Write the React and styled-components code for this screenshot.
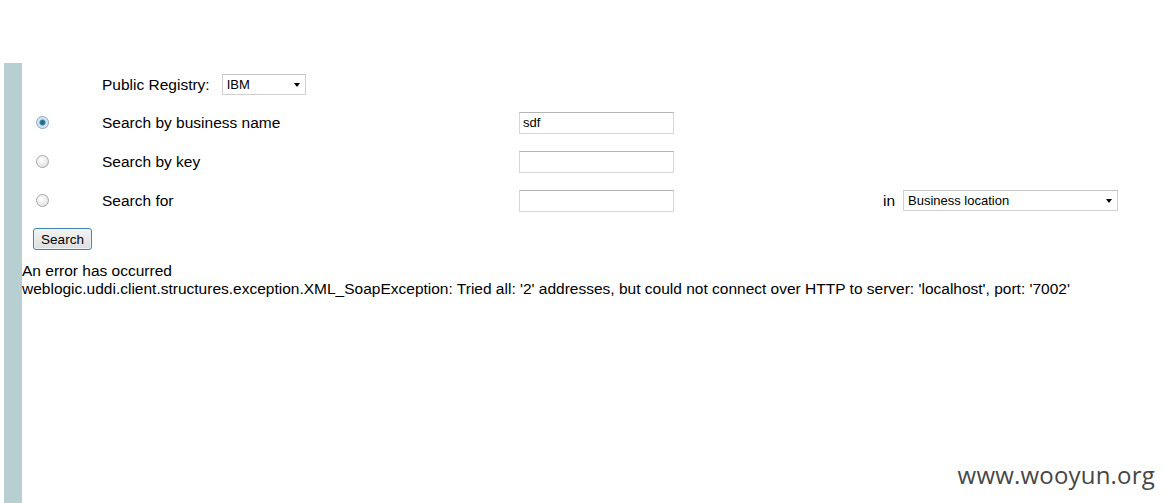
import React from "react";
import styled, { createGlobalStyle } from "styled-components";

const GlobalStyle = createGlobalStyle`
  html, body {
    margin: 0;
    padding: 0;
    background: #ffffff;
  }
  #root {
    height: 503px;
  }
`;

const Page = styled.div`
  position: relative;
  display: flex;
  height: 503px;
  font-family: "Liberation Sans", Arial, sans-serif;
  color: #000;
  overflow: hidden;
`;

const SideBar = styled.div`
  width: 18px;
  margin-left: 4px;
  margin-top: 63px;
  background: #b7cfd0;
  flex-shrink: 0;
`;

const Content = styled.div`
  flex: 1;
  padding-top: 66px;
`;

const FormGrid = styled.div`
  display: grid;
  grid-template-columns: 80px 417px 364px 20px 215px;
  grid-template-rows: 37px 39px 39px 39px;
  align-items: center;
  font-size: 15.5px;
`;

const Cell = styled.div`
  grid-column: ${(p) => p.$col || "auto"};
  display: flex;
  align-items: center;
`;

const RadioCell = styled(Cell)`
  padding-left: 14px;
`;

const Label = styled.span`
  font-size: 15.5px;
  white-space: nowrap;
`;

const Radio = styled.input.attrs({ type: "radio" })`
  appearance: none;
  margin: 0;
  width: 13px;
  height: 13px;
  border-radius: 50%;
  border: 1px solid #a7a7a7;
  background: radial-gradient(circle at 40% 35%, #ffffff 0%, #e6e6e6 70%, #d3d3d3 100%);
  box-sizing: border-box;
  &:checked {
    border-color: #8ca3b8;
    background: radial-gradient(circle, #1d5f86 0%, #2a7aa6 30%, #cfe0ec 45%, #eef3f7 100%);
  }
`;

const SelectWrap = styled.div`
  position: relative;
  display: inline-block;
  width: ${(p) => p.$w}px;
  height: 21px;
  margin-left: ${(p) => p.$ml || 0}px;
`;

const Select = styled.select`
  appearance: none;
  width: 100%;
  height: 100%;
  box-sizing: border-box;
  border: 1px solid #d0d0d0;
  border-top-color: #c4c4c4;
  background: #fff;
  font-family: "Liberation Sans", Arial, sans-serif;
  font-size: 13px;
  padding: 0 0 0 4px;
  color: #000;
  outline: none;
`;

const Arrow = styled.span`
  position: absolute;
  right: 6px;
  top: 9px;
  width: 0;
  height: 0;
  border-left: 3.5px solid transparent;
  border-right: 3.5px solid transparent;
  border-top: 4px solid #000;
  pointer-events: none;
`;

const TextInput = styled.input.attrs({ type: "text" })`
  width: 155px;
  height: 22px;
  box-sizing: border-box;
  border: 1px solid #d6d6d6;
  border-top-color: #b3b3b3;
  font-family: "Liberation Sans", Arial, sans-serif;
  font-size: 13px;
  padding: 0 3px;
  margin: 0;
  outline: none;
`;

const InLabel = styled.span`
  font-size: 15.5px;
`;

const SearchButton = styled.button`
  margin: 8px 0 0 11px;
  width: 59px;
  height: 22px;
  box-sizing: border-box;
  border: 1px solid #3f86b6;
  border-radius: 3px;
  background: linear-gradient(#f3f3f3, #dedede);
  box-shadow: inset 0 0 0 1px #e9f3fa;
  font-family: "Liberation Sans", Arial, sans-serif;
  font-size: 13.5px;
  color: #000;
  padding: 0;
`;

const ErrorBlock = styled.div`
  margin-top: 12px;
  font-size: 15.5px;
  line-height: 18px;
  white-space: nowrap;
`;

const Watermark = styled.div`
  position: absolute;
  right: 9px;
  bottom: 12px;
  font-family: "Open Sans", "Noto Sans", sans-serif;
  font-size: 24px;
  color: #474747;
  letter-spacing: 0.2px;
`;

function Registry() {
  return (
    <SelectWrap $w={84} $ml={12}>
      <Select defaultValue="IBM">
        <option>IBM</option>
        <option>Microsoft</option>
      </Select>
      <Arrow />
    </SelectWrap>
  );
}

export default function App() {
  return (
    <Page>
      <GlobalStyle />
      <SideBar />
      <Content>
        <FormGrid>
          <Cell $col="2 / 4">
            <Label>Public Registry:</Label>
            <Registry />
          </Cell>

          <RadioCell $col="1">
            <Radio name="mode" defaultChecked />
          </RadioCell>
          <Cell $col="2">
            <Label>Search by business name</Label>
          </Cell>
          <Cell $col="3 / 6">
            <TextInput defaultValue="sdf" />
          </Cell>

          <RadioCell $col="1">
            <Radio name="mode" />
          </RadioCell>
          <Cell $col="2">
            <Label>Search by key</Label>
          </Cell>
          <Cell $col="3 / 6">
            <TextInput />
          </Cell>

          <RadioCell $col="1">
            <Radio name="mode" />
          </RadioCell>
          <Cell $col="2">
            <Label>Search for</Label>
          </Cell>
          <Cell $col="3">
            <TextInput />
          </Cell>
          <Cell $col="4">
            <InLabel>in</InLabel>
          </Cell>
          <Cell $col="5">
            <SelectWrap $w={215}>
              <Select defaultValue="Business location">
                <option>Business location</option>
                <option>Business name</option>
              </Select>
              <Arrow />
            </SelectWrap>
          </Cell>
        </FormGrid>

        <SearchButton>Search</SearchButton>

        <ErrorBlock>
          An error has occurred
          <br />
          weblogic.uddi.client.structures.exception.XML_SoapException: Tried all: '2' addresses, but could not connect over HTTP to server: 'localhost', port: '7002'
        </ErrorBlock>
      </Content>
      <Watermark>www.wooyun.org</Watermark>
    </Page>
  );
}
